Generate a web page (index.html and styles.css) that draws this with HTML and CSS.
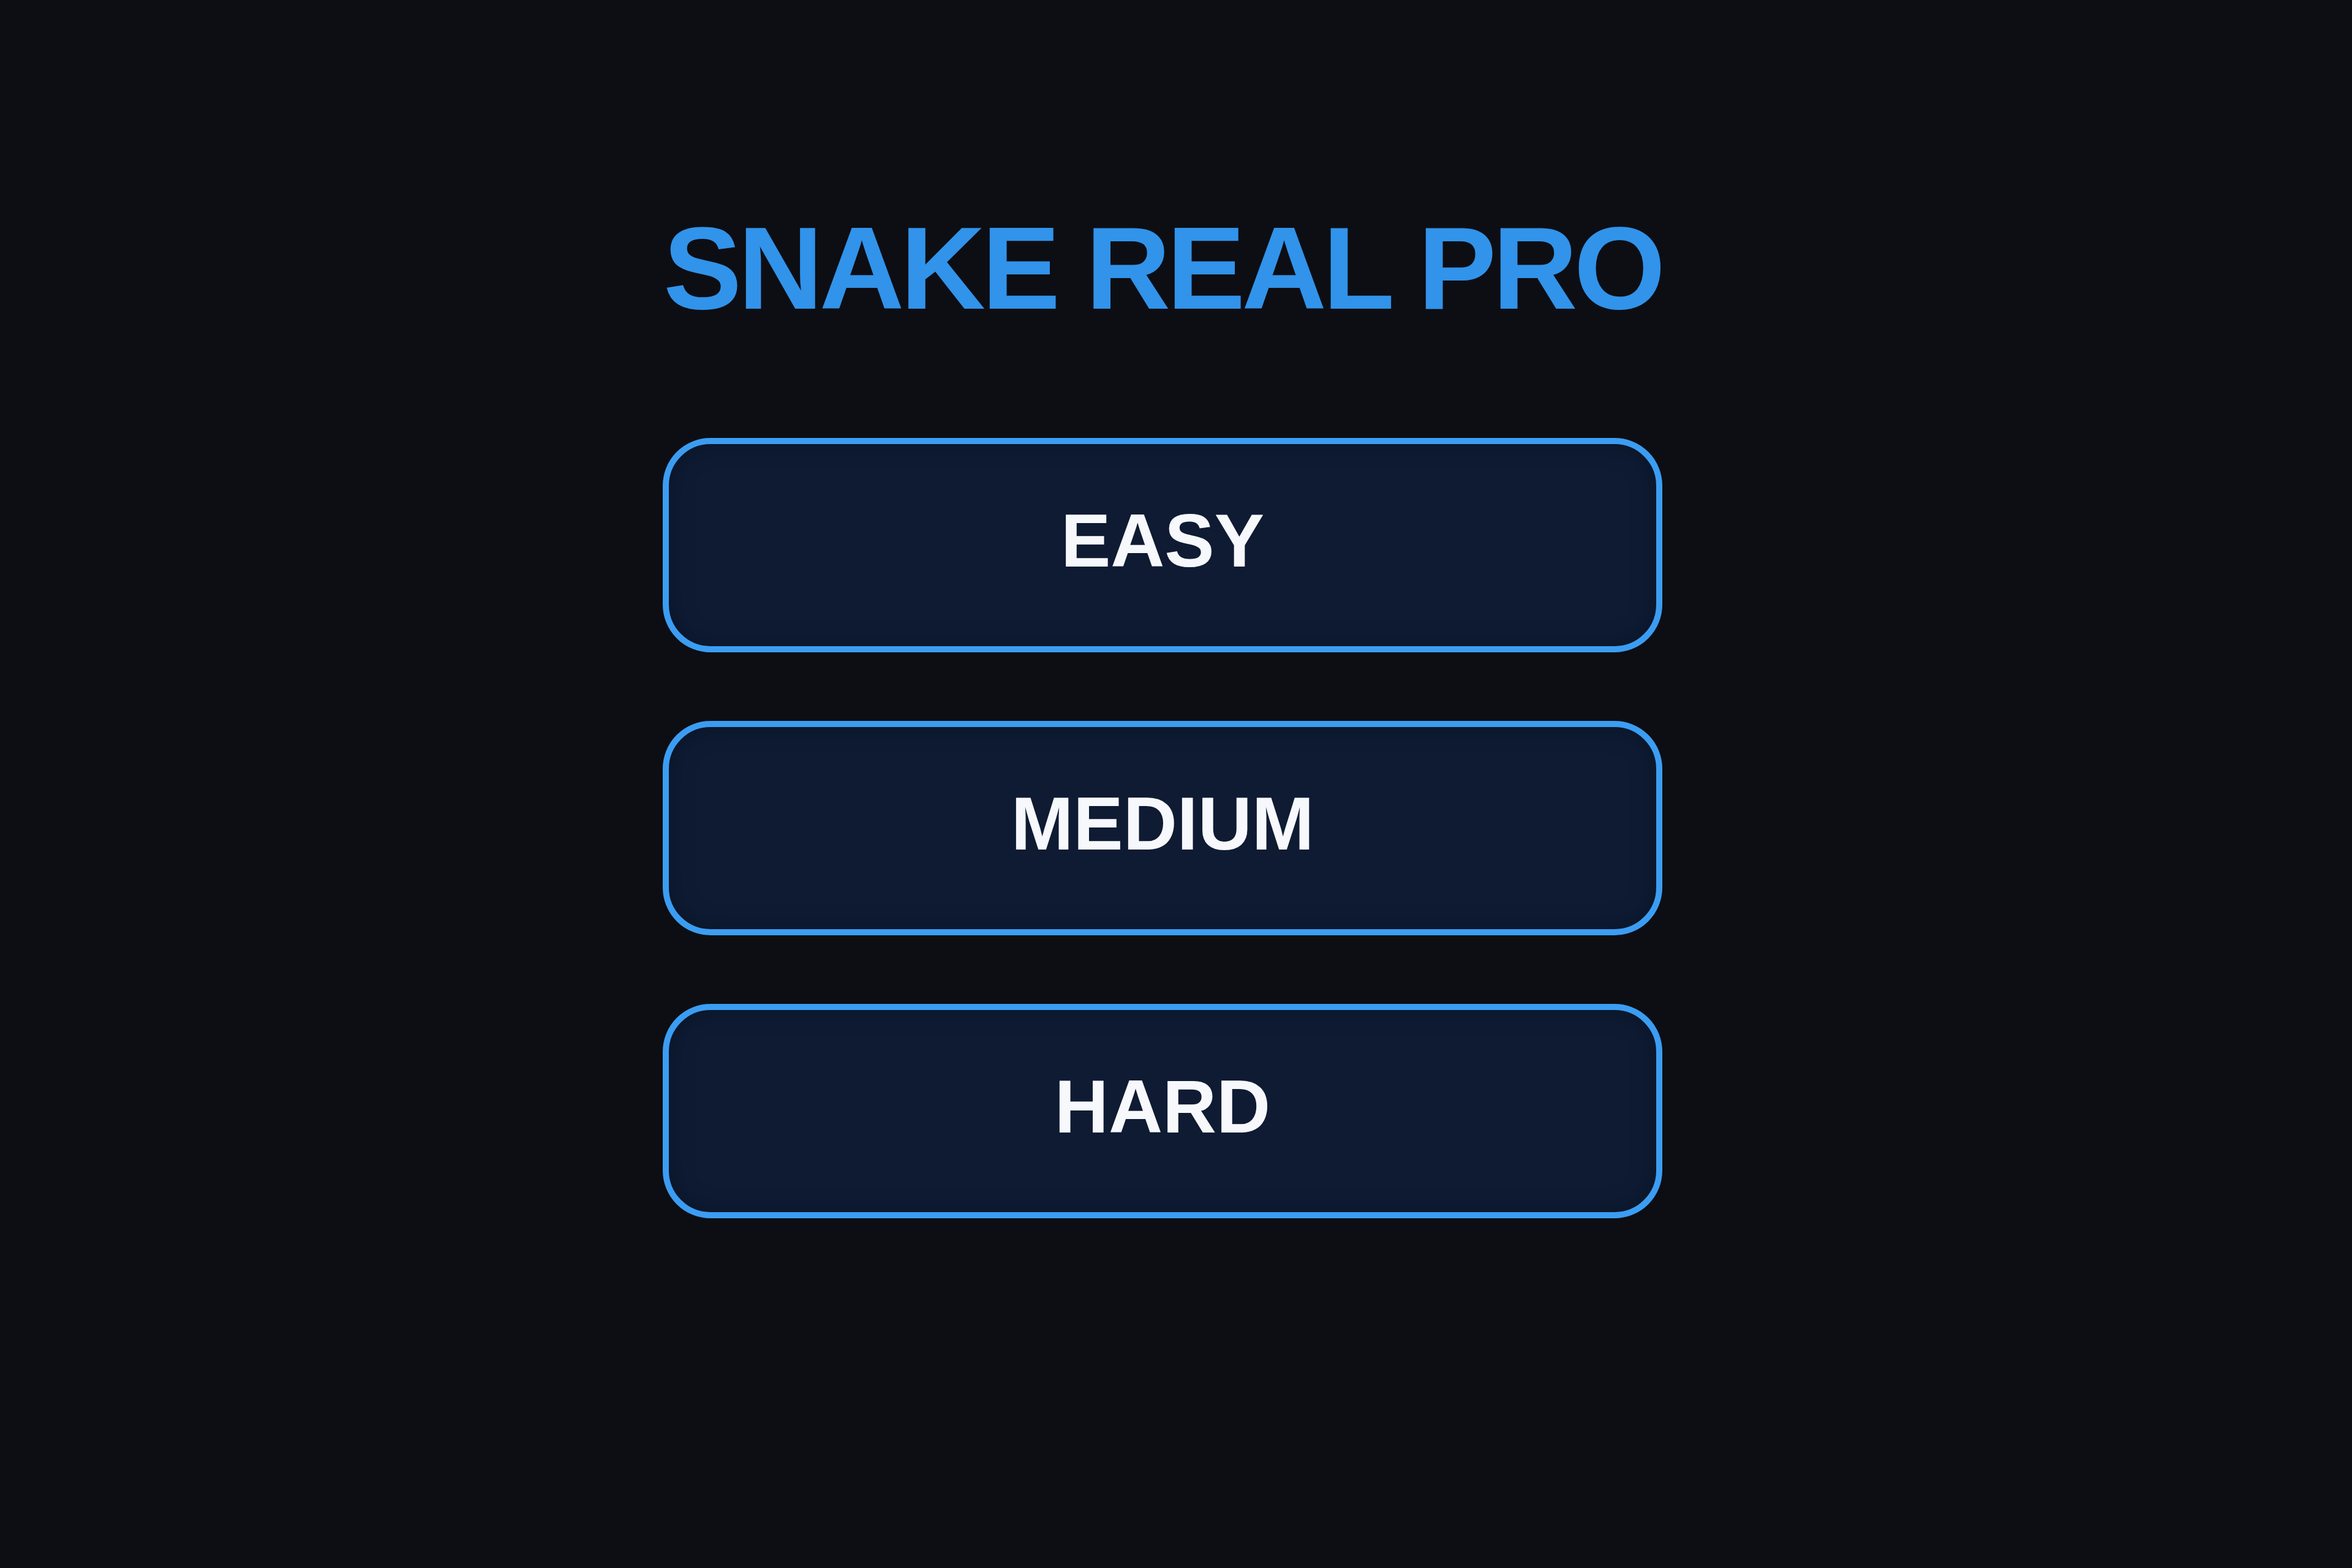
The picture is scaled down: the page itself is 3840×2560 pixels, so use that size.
FILE: index.html
```html
<!DOCTYPE html>
<html lang="en">
<head>
    <meta charset="UTF-8">
    <meta name="viewport" content="width=device-width, initial-scale=1.0">
    <title>Snake Real Pro</title>
    <link rel="stylesheet" href="styles.css">
</head>
<body>
<div class="menu">
    <h1 class="title">SNAKE REAL PRO</h1>
    <div class="levels">
        <button class="level-btn">EASY</button>
        <button class="level-btn">MEDIUM</button>
        <button class="level-btn">HARD</button>
    </div>
</div>
</body>
</html>
```

FILE: styles.css
```css
html, body {
    margin: 0;
    padding: 0;
}
body {
    min-height: 100vh;
    background-color: #0d0e14;
    font-family: "Liberation Sans", Arial, sans-serif;
    padding-right: 44px;
    box-sizing: border-box;
}
.menu {
    display: flex;
    flex-direction: column;
    align-items: center;
    padding-top: 342px;
}
.title {
    margin: 0;
    font-size: 192px;
    line-height: 1;
    font-weight: bold;
    letter-spacing: -6px;
    color: #3193ea;
}
.levels {
    display: flex;
    flex-direction: column;
    gap: 112px;
    margin-top: 181px;
}
.level-btn {
    width: 1632px;
    height: 350px;
    box-sizing: border-box;
    display: flex;
    align-items: center;
    justify-content: center;
    padding: 0 0 14px 0;
    background-color: #0e1b33;
    border: 10px solid #3b9df2;
    border-radius: 78px;
    box-shadow: inset 0 0 40px rgba(0, 0, 0, 0.25);
    color: #f7f8fb;
    font-family: "Liberation Sans", Arial, sans-serif;
    font-weight: bold;
    font-size: 122px;
    line-height: 1;
    cursor: pointer;
}
```
